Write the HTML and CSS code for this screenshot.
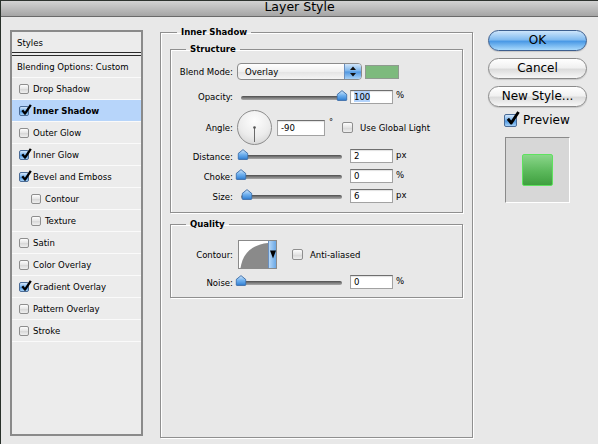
FILE: index.html
```html
<!DOCTYPE html>
<html lang="en">
<head>
  <meta charset="UTF-8">
  <title>Layer Style</title>
  <link rel="stylesheet" href="styles.css">
</head>
<body>
  <div class="window">
      <div class="titlebar">Layer Style</div>

      <div class="dialog">
          <!-- left list of effects -->
          <div class="styles-list">
              <div class="list-head">Styles</div>
              <div class="list-row blend">Blending Options: Custom</div>
              <div class="list-row"><span class="cb"></span>Drop Shadow</div>
              <div class="list-row selected"><span class="cb on"><svg><use href="#check"/></svg></span>Inner Shadow</div>
              <div class="list-row"><span class="cb"></span>Outer Glow</div>
              <div class="list-row"><span class="cb on"><svg><use href="#check"/></svg></span>Inner Glow</div>
              <div class="list-row"><span class="cb on"><svg><use href="#check"/></svg></span>Bevel and Emboss</div>
              <div class="list-row sub"><span class="cb"></span>Contour</div>
              <div class="list-row sub"><span class="cb"></span>Texture</div>
              <div class="list-row"><span class="cb"></span>Satin</div>
              <div class="list-row"><span class="cb"></span>Color Overlay</div>
              <div class="list-row"><span class="cb on"><svg><use href="#check"/></svg></span>Gradient Overlay</div>
              <div class="list-row"><span class="cb"></span>Pattern Overlay</div>
              <div class="list-row"><span class="cb"></span>Stroke</div>
          </div>

          <!-- settings -->
          <fieldset class="group outer">
              <legend class="legend-outer">Inner Shadow</legend>

              <fieldset class="group structure">
                  <legend>Structure</legend>

                  <div class="row r-blend">
                      <span class="lbl">Blend Mode:</span>
                      <div class="select">
                          <span class="val">Overlay</span>
                          <span class="arrows"><svg viewBox="0 0 16 15"><path d="M5 6 L8 2.5 L11 6 Z M5 9 L8 12.5 L11 9 Z" fill="#111"/></svg></span>
                      </div>
                      <span class="swatch"></span>
                  </div>

                  <div class="row r-opacity">
                      <span class="lbl">Opacity:</span>
                      <div class="slider"><span class="thumb" style="left:100%"><svg><use href="#thumb"/></svg></span></div>
                      <span class="field"><span class="sel">100</span></span>
                      <span class="unit">%</span>
                  </div>

                  <div class="row r-angle">
                      <span class="lbl">Angle:</span>
                      <div class="dial">
                          <svg viewBox="0 0 33 33"><line x1="16.5" y1="16.5" x2="16.5" y2="31" stroke="#6a6a6a" stroke-width="1"/><circle cx="16.5" cy="16.5" r="1.3" fill="#555"/></svg>
                      </div>
                      <span class="field wide">-90</span>
                      <span class="deg">°</span>
                      <span class="cb big"></span>
                      <span class="cb-text">Use Global Light</span>
                  </div>

                  <div class="row r-distance">
                      <span class="lbl">Distance:</span>
                      <div class="slider"><span class="thumb" style="left:2%"><svg><use href="#thumb"/></svg></span></div>
                      <span class="field">2</span>
                      <span class="unit">px</span>
                  </div>

                  <div class="row r-choke">
                      <span class="lbl">Choke:</span>
                      <div class="slider"><span class="thumb" style="left:0%"><svg><use href="#thumb"/></svg></span></div>
                      <span class="field">0</span>
                      <span class="unit">%</span>
                  </div>

                  <div class="row r-size">
                      <span class="lbl">Size:</span>
                      <div class="slider"><span class="thumb" style="left:6%"><svg><use href="#thumb"/></svg></span></div>
                      <span class="field">6</span>
                      <span class="unit">px</span>
                  </div>
              </fieldset>

              <fieldset class="group quality">
                  <legend>Quality</legend>

                  <div class="row r-contour">
                      <span class="lbl">Contour:</span>
                      <div class="contour">
                          <svg class="curve" viewBox="0 0 29 27"><path d="M1.5 27 C 3.5 14, 11 4, 29 2 L29 27 Z" fill="#8a8a8a"/></svg>
                          <span class="c-arrow"><svg viewBox="0 0 8 27"><path d="M1 9.5 L7 9.5 L4 17.5 Z" fill="#000"/></svg></span>
                      </div>
                      <span class="cb aa"></span>
                      <span class="cb-text">Anti-aliased</span>
                  </div>

                  <div class="row r-noise">
                      <span class="lbl">Noise:</span>
                      <div class="slider"><span class="thumb" style="left:0%"><svg><use href="#thumb"/></svg></span></div>
                      <span class="field">0</span>
                      <span class="unit">%</span>
                  </div>
              </fieldset>
          </fieldset>

          <!-- buttons and preview -->
          <div class="side">
              <div class="btn default">OK</div>
              <div class="btn">Cancel</div>
              <div class="btn">New Style...</div>
              <div class="preview-toggle">
                  <span class="cb on large"><svg><use href="#check"/></svg></span>
                  <span>Preview</span>
              </div>
              <div class="preview-box">
                  <div class="preview-swatch"></div>
              </div>
          </div>
      </div>
  </div>

  <svg class="defs" width="0" height="0">
      <defs>
          <linearGradient id="gThumb" x1="0" y1="0" x2="0" y2="1">
              <stop offset="0" stop-color="#d4e8fb"/>
              <stop offset="0.5" stop-color="#6fb0ee"/>
              <stop offset="1" stop-color="#2f7fd4"/>
          </linearGradient>
      </defs>
      <symbol id="check" viewBox="0 0 12 12">
          <path d="M2.3 6.2 L5 9.6 L10.8 0.8" fill="none" stroke="#000" stroke-width="2.3" stroke-linejoin="round"/>
      </symbol>
      <symbol id="thumb" viewBox="0 0 11 11">
          <path d="M5.5 0.6 L10.4 4.6 V9.6 Q10.4 10.4 9.6 10.4 H1.4 Q0.6 10.4 0.6 9.6 V4.6 Z" fill="url(#gThumb)" stroke="#3a6aa4" stroke-width="0.9"/>
      </symbol>
  </svg>
</body>
</html>
```

FILE: styles.css
```css
* {
    box-sizing: border-box;
}
body {
    margin: 0;
    background: #e8e8e8;
    font-family: "DejaVu Sans Condensed", "DejaVu Sans", sans-serif;
    font-size: 9.5px;
    color: #000;
}
.window {
    width: 598px;
    height: 444px;
    border-left: 1px solid #28302a;
    display: flex;
    flex-direction: column;
    overflow: hidden;
}
.titlebar {
    height: 17px;
    flex: none;
    background: linear-gradient(#d3d3d3, #a5a5a5);
    border-top: 1px solid #2e332f;
    border-bottom: 1px solid #6a6a6a;
    text-align: center;
    font-family: "DejaVu Sans", sans-serif;
    font-size: 12.5px;
    line-height: 11px;
}
.dialog {
    flex: 1;
    display: flex;
    padding: 9px 0 6px 9px;
}

/* styles list */
.styles-list {
    width: 133px;
    flex: none;
    margin: 4px 0 2px;
    border: 2px solid #8a8a8a;
    background: #ececec;
}
.list-head {
    height: 21px;
    line-height: 21px;
    padding-left: 5px;
    border-bottom: 1px solid #2a2a2a;
    margin-bottom: 2px;
}
.list-row {
    height: 22px;
    display: flex;
    align-items: center;
    border-bottom: 1px solid #fafafa;
}
.list-row.blend {
    height: 23px;
    padding-left: 5px;
    border-top: 1px solid #2a2a2a;
}
.list-row.selected {
    background: #b7d5fa;
    font-weight: bold;
}
.cb {
    position: relative;
    flex: none;
    width: 10px;
    height: 10px;
    margin: 0 4px 0 7px;
    border: 1px solid #8e8e8e;
    border-radius: 2px;
    background: linear-gradient(#fdfdfd, #e4e4e4 50%, #d6d6d6 51%, #efefef);
}
.cb.on {
    border-color: #4a6b96;
    background: linear-gradient(#d3e7fb, #75b1ec 48%, #4b94df 52%, #a4d1f8);
}
.cb svg {
    position: absolute;
    left: 0;
    top: -3px;
    width: 12px;
    height: 12px;
    overflow: visible;
}
.list-row.sub .cb {
    margin-left: 19px;
}

/* group boxes */
.group {
    margin: 0;
    padding: 0;
    min-width: 0;
    border: 1px solid #8f8f8f;
    box-shadow: inset 1px 1px 0 #fff, 1px 1px 0 #fff;
}
.group legend {
    font-weight: bold;
    line-height: 12px;
    padding: 0 4px;
    margin-left: 15px;
}
.outer {
    width: 313px;
    flex: none;
    margin-left: 17px;
    padding: 5px 9px 0;
}
.outer > .legend-outer {
    margin-left: 7px;
}
.structure {
    padding-bottom: 9px;
}
.quality {
    margin-top: 5px;
    padding-bottom: 8px;
}

/* form rows */
.row {
    display: flex;
    align-items: center;
}
.lbl {
    width: 62px;
    flex: none;
    text-align: right;
}
.r-blend {
    height: 17px;
    margin-top: 8px;
}
.r-opacity {
    height: 15px;
    margin-top: 9px;
}
.r-angle {
    height: 35px;
    margin-top: 6px;
}
.r-distance {
    height: 14px;
    margin-top: 4px;
}
.r-choke,
.r-size {
    height: 14px;
    margin-top: 6px;
}
.r-contour {
    height: 29px;
    margin-top: 10px;
}
.r-noise {
    height: 14px;
    margin-top: 6px;
}

.select {
    display: flex;
    width: 125px;
    height: 17px;
    margin-left: 4px;
    border: 1px solid #8b8b8b;
    border-radius: 4px;
    background: linear-gradient(#ffffff, #f0f0f0 50%, #e3e3e3 51%, #f5f5f5);
    overflow: hidden;
}
.select .val {
    flex: 1;
    padding-left: 7px;
    line-height: 15px;
}
.select .arrows {
    width: 17px;
    border-left: 1px solid #6a8fbf;
    background: linear-gradient(#d2e6fa, #78b2ea 48%, #4f96e0 52%, #a9d2f7);
}
.select .arrows svg {
    display: block;
    width: 16px;
    height: 15px;
}
.swatch {
    width: 34px;
    height: 14px;
    margin-left: 3px;
    border: 1px solid #8f9a8f;
    background: #7dba7d;
}

.slider {
    position: relative;
    width: 101px;
    height: 4px;
    margin-left: 8px;
    margin-top: 2px;
    border-radius: 2px;
    background: linear-gradient(#4c4c4c, #7f7f7f 50%, #a9a9a9);
}
.thumb {
    position: absolute;
    bottom: -1px;
    width: 11px;
    height: 11px;
    transform: translateX(-50%);
}
.thumb svg {
    display: block;
    width: 11px;
    height: 11px;
}

.field {
    width: 43px;
    height: 14px;
    flex: none;
    margin-left: 8px;
    padding-left: 3px;
    line-height: 12px;
    background: #fff;
    border: 1px solid #a2a2a2;
    border-top-color: #6f6f6f;
    box-shadow: inset 0 1px 1px rgba(0, 0, 0, 0.12);
}
.field .sel {
    background: #b3d3fb;
}
.unit {
    margin-left: 3px;
    margin-top: -4px;
}

.dial {
    width: 35px;
    height: 35px;
    flex: none;
    margin-left: 4px;
    border: 1px solid #8c8c8c;
    border-radius: 50%;
    background: radial-gradient(circle at 50% 30%, #fdfdfd, #ececec 55%, #cdcdcd);
}
.dial svg {
    display: block;
    width: 33px;
    height: 33px;
}
.field.wide {
    width: 48px;
    height: 16px;
    margin-left: 5px;
    line-height: 14px;
}
.deg {
    align-self: flex-start;
    margin: 7px 0 0 4px;
    font-size: 9px;
}
.cb.big {
    width: 11px;
    height: 11px;
    margin-left: 9px;
    margin-right: 0;
}
.cb-text {
    margin-left: 7px;
}

.contour {
    display: flex;
    width: 39px;
    height: 29px;
    margin-left: 5px;
    border: 1px solid #8a8a8a;
    background: #fff;
}
.contour .curve {
    display: block;
    width: 29px;
    height: 27px;
}
.c-arrow {
    width: 8px;
    border-left: 1px solid #6a8fbf;
    background: linear-gradient(90deg, #b4d6f6, #6aa8e6);
}
.c-arrow svg {
    display: block;
    width: 8px;
    height: 27px;
}
.cb.aa {
    width: 11px;
    height: 11px;
    margin-left: 15px;
    margin-right: 0;
}

/* right column */
.side {
    width: 99px;
    flex: none;
    margin: 4px 0 0 15px;
    display: flex;
    flex-direction: column;
    font-family: "DejaVu Sans", sans-serif;
    font-size: 12px;
}
.btn {
    height: 21px;
    margin-bottom: 7px;
    border: 1px solid #8a8a8a;
    border-radius: 11px;
    text-align: center;
    line-height: 19px;
    background: linear-gradient(#ffffff, #f1f1f1 45%, #dcdcdc 55%, #f7f7f7);
    box-shadow: 0 1px 1px rgba(0, 0, 0, 0.15);
}
.btn.default {
    border-color: #3d5f8f;
    background: linear-gradient(#cde5fb, #83bcf0 45%, #4b9ae6 55%, #a9dafc);
}
.preview-toggle {
    display: flex;
    align-items: center;
    height: 14px;
    margin-top: -1px;
}
.cb.large {
    width: 13px;
    height: 13px;
    margin: 0 6px 0 16px;
}
.cb.large svg {
    width: 15px;
    height: 15px;
    top: -4px;
    left: 0;
}
.preview-box {
    width: 65px;
    height: 66px;
    margin: 10px 0 0 17px;
    display: flex;
    align-items: center;
    justify-content: center;
    background: #d7d7d7;
    border: 1px solid #fff;
    border-top-color: #8a8a8a;
    border-left-color: #8a8a8a;
}
.preview-swatch {
    width: 31px;
    height: 32px;
    border: 1px solid #5fe25f;
    border-radius: 2px;
    background: linear-gradient(#8ad68a, #5bb85b 55%, #3f9f3f);
}

.defs {
    position: absolute;
    width: 0;
    height: 0;
}
```
